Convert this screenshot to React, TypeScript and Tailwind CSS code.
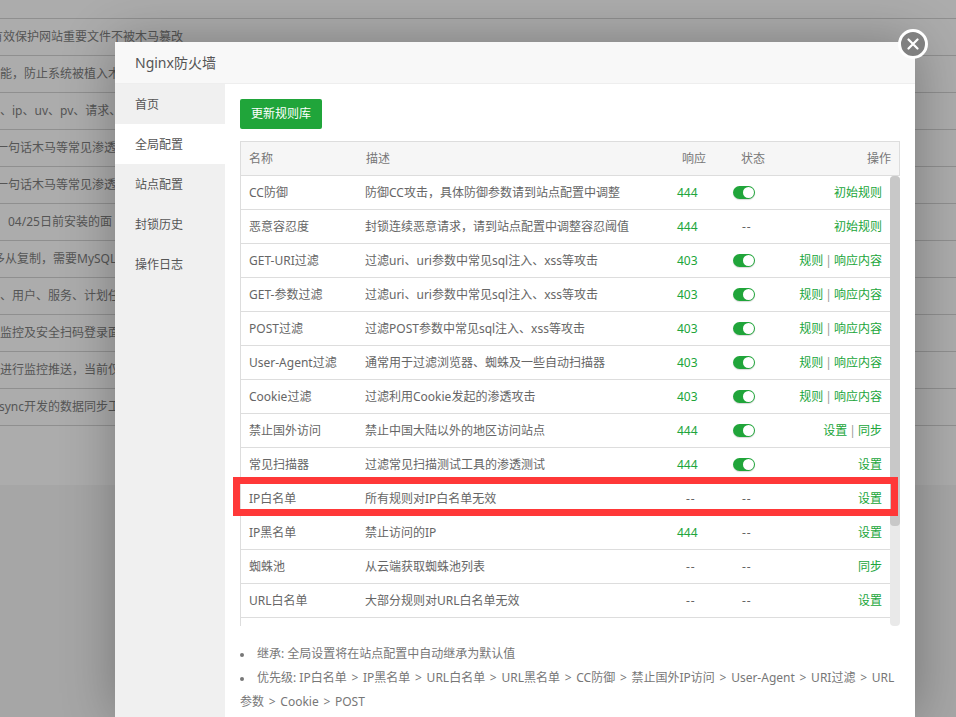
import React from 'react';

// left edge of each row is cut off by the page, hence the negative offsets
const bgRows = [
  { text: '有效保护网站重要文件不被木马篡改', cls: 'ml-[-9px]' },
  { text: '能，防止系统被植入木', cls: '' },
  { text: '、ip、uv、pv、请求、', cls: '' },
  { text: '一句话木马等常见渗透', cls: 'ml-[-4px]' },
  { text: '一句话木马等常见渗透', cls: 'ml-[-4px]' },
  { text: '04/25日前安装的面', cls: 'ml-[8px]' },
  { text: '多从复制，需要MySQL', cls: 'ml-[-7px]' },
  { text: '、用户、服务、计划任', cls: '' },
  { text: '监控及安全扫码登录面', cls: '' },
  { text: '进行监控推送，当前仅', cls: '' },
  { text: 'sync开发的数据同步工', cls: 'ml-[-1px]' },
];

const menu = ['首页', '全局配置', '站点配置', '封锁历史', '操作日志'];

type Rule = { name: string; desc: string; code: string; on: boolean | null; ops: string[] };

const rules: Rule[] = [
  { name: 'CC防御', desc: '防御CC攻击，具体防御参数请到站点配置中调整', code: '444', on: true, ops: ['初始规则'] },
  { name: '恶意容忍度', desc: '封锁连续恶意请求，请到站点配置中调整容忍阈值', code: '444', on: null, ops: ['初始规则'] },
  { name: 'GET-URI过滤', desc: '过滤uri、uri参数中常见sql注入、xss等攻击', code: '403', on: true, ops: ['规则', '响应内容'] },
  { name: 'GET-参数过滤', desc: '过滤uri、uri参数中常见sql注入、xss等攻击', code: '403', on: true, ops: ['规则', '响应内容'] },
  { name: 'POST过滤', desc: '过滤POST参数中常见sql注入、xss等攻击', code: '403', on: true, ops: ['规则', '响应内容'] },
  { name: 'User-Agent过滤', desc: '通常用于过滤浏览器、蜘蛛及一些自动扫描器', code: '403', on: true, ops: ['规则', '响应内容'] },
  { name: 'Cookie过滤', desc: '过滤利用Cookie发起的渗透攻击', code: '403', on: true, ops: ['规则', '响应内容'] },
  { name: '禁止国外访问', desc: '禁止中国大陆以外的地区访问站点', code: '444', on: true, ops: ['设置', '同步'] },
  { name: '常见扫描器', desc: '过滤常见扫描测试工具的渗透测试', code: '444', on: true, ops: ['设置'] },
  { name: 'IP白名单', desc: '所有规则对IP白名单无效', code: '--', on: null, ops: ['设置'] },
  { name: 'IP黑名单', desc: '禁止访问的IP', code: '444', on: null, ops: ['设置'] },
  { name: '蜘蛛池', desc: '从云端获取蜘蛛池列表', code: '--', on: null, ops: ['同步'] },
  { name: 'URL白名单', desc: '大部分规则对URL白名单无效', code: '--', on: null, ops: ['设置'] },
];

const Toggle = () => (
  <span className="flex h-[13px] w-[22px] items-center justify-end rounded-full bg-[#20a53a] pr-[1px] shadow-[0_1px_1px_rgba(0,0,0,0.15)]">
    <span className="h-[11px] w-[11px] rounded-full bg-white" />
  </span>
);

const RuleRow = ({ rule }: { rule: Rule }) => (
  <div className="flex h-[34px] items-center border-b border-[#ddd]">
    <div className="w-[124px] pl-[8px]">{rule.name}</div>
    <div className="w-[312px] whitespace-nowrap">{rule.desc}</div>
    <div className={`w-[56px] ${rule.code === '--' ? 'pl-[9px] tracking-[1px]' : 'text-[#20a53a]'}`}>{rule.code}</div>
    <div className="flex w-[46px] justify-start">
      {rule.on ? <Toggle /> : <span className="pl-[9px] tracking-[1px]">--</span>}
    </div>
    <div className="flex flex-1 justify-end pr-[8px] text-[#20a53a]">
      {rule.ops.map((op, i) => (
        <React.Fragment key={op}>
          {i > 0 && <span className="px-[2px] text-[#999]">|</span>}
          <span>{op}</span>
        </React.Fragment>
      ))}
    </div>
  </div>
);

export default function App() {
  return (
    <div className="relative h-[717px] w-[956px] overflow-hidden bg-[#a6a6a6] font-['Noto_Sans','Noto_Sans_CJK_SC',sans-serif] text-xs text-[#666]">
      {/* page behind the dialog */}
      <div className="h-[485px] overflow-hidden bg-[#acacac] pt-[18px] text-[#555]">
        {bgRows.map((row, i) => (
          <div key={i} className="flex h-[37px] items-center border-t border-[#8f8f8f]">
            <span className={`whitespace-nowrap ${row.cls}`}>{row.text}</span>
          </div>
        ))}
        <div className="border-t border-[#8f8f8f]" />
      </div>

      {/* dialog */}
      <div className="absolute left-[115px] top-[42px] h-[675px] w-[800px] bg-white shadow-[1px_1px_50px_rgba(0,0,0,0.3)]">
        <div className="flex h-[42px] items-center border-b border-[#eee] bg-[#f8f8f8] pl-[20px] text-sm text-[#555]">
          Nginx防火墙
        </div>
        <div className="flex h-[633px]">
          <div className="w-[110px] bg-[#f0f0f0] text-[#555]">
            {menu.map(item => (
              <div key={item} className={`flex h-[40px] items-center pl-[20px] pt-[1px] ${item === '全局配置' ? 'bg-white' : ''}`}>
                {item}
              </div>
            ))}
          </div>
          <div className="relative flex-1 px-[15px] pt-[15px]">
            <button className="block h-[30px] w-[82px] rounded-[2px] bg-[#20a53a] text-white">更新规则库</button>

            <div className="mt-[12px] border-l border-[#ddd]">
              <div className="flex h-[35px] items-center border border-l-0 border-[#ddd] bg-[#f6f6f6] pt-[1px] text-[#777]">
                <div className="w-[125px] pl-[8px]">名称</div>
                <div className="w-[316px]">描述</div>
                <div className="w-[59px]">响应</div>
                <div className="w-[60px]">状态</div>
                <div className="flex-1 pr-[8px] text-right">操作</div>
              </div>
              <div className="flex h-[450px]">
                <div className="flex-1 overflow-hidden">
                  {rules.map(rule => (
                    <RuleRow key={rule.name} rule={rule} />
                  ))}
                </div>
                <div className="w-[10px] rounded-[4px] bg-[#e9e9e9]">
                  <div className="h-[350px] rounded-[4px] bg-[#c8c8c8]" />
                </div>
              </div>
            </div>

            <ul className="mt-[16px] leading-[24px] text-[#777]">
              <li className="before:mr-[13px] before:inline-block before:h-[4px] before:w-[4px] before:rounded-full before:bg-[#777] before:align-middle">
                继承: 全局设置将在站点配置中自动继承为默认值
              </li>
              <li className="before:mr-[13px] before:inline-block before:h-[4px] before:w-[4px] before:rounded-full before:bg-[#777] before:align-middle">
                优先级: <span className="[word-spacing:1.6px]">IP白名单 &gt; IP黑名单 &gt; URL白名单 &gt; URL黑名单 &gt; CC防御 &gt; 禁止国外IP访问 &gt; User-Agent &gt; URI过滤 &gt; URL 参数 &gt; Cookie &gt; POST</span>
              </li>
            </ul>

            {/* red annotation drawn over the screenshot */}
            <div className="absolute left-[8px] top-[393px] h-[39px] w-[665px] border-[7px] border-[#ff3838]" />
          </div>
        </div>
      </div>

      {/* close button */}
      <div className="absolute left-[898px] top-[29px] flex h-[30px] w-[30px] items-center justify-center rounded-full border-[3px] border-white bg-[#808080]">
        <svg width="12" height="12" viewBox="0 0 12 12" className="text-white">
          <path d="M1.5 1.5 L10.5 10.5 M10.5 1.5 L1.5 10.5" stroke="currentColor" strokeWidth="2.2" strokeLinecap="round" />
        </svg>
      </div>
    </div>
  );
}
